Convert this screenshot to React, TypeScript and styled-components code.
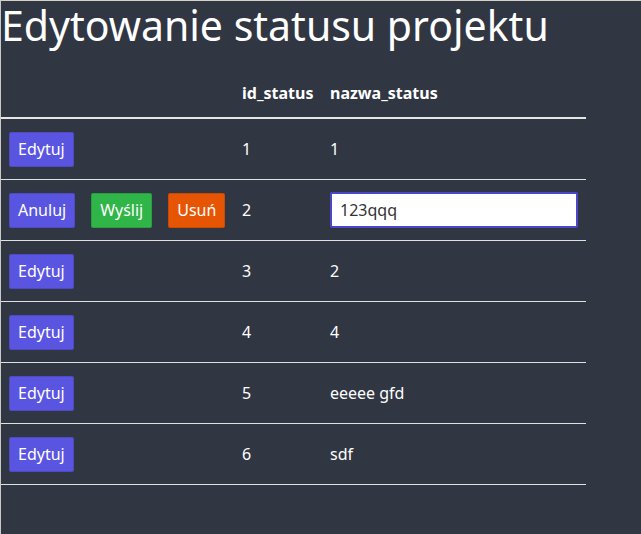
import { styled, createGlobalStyle } from 'styled-components'

const GlobalStyle = createGlobalStyle`
  html, body {
    margin: 0;
    padding: 0;
    background-color: #313643;
  }
  body {
    font-family: 'Noto Sans', 'Open Sans', sans-serif;
    color: #ffffff;
  }
`

const PageDiv = styled.div`
  min-height: 533px;
  border-top: 1px solid #d6d1c6;
  border-left: 1px solid #c9c9c9;
  background-color: #313643;
`

const Title = styled.h1`
  margin: 0;
  padding: 4px 0 0 0;
  font-size: 41px;
  font-weight: 400;
  line-height: 41px;
  color: #ffffff;
`

const StatusTable = styled.table`
  width: 585px;
  margin-top: 8px;
  border-collapse: collapse;
  table-layout: fixed;
`

const HeadCell = styled.th<{ $w?: number }>`
  width: ${(p) => (p.$w ? `${p.$w}px` : 'auto')};
  height: 50px;
  padding: 0 8px 13px;
  text-align: left;
  vertical-align: bottom;
  font-size: 16px;
  font-weight: 700;
  line-height: 22px;
  border-bottom: 2px solid #e6e6e6;
`

const Row = styled.tr`
  border-bottom: 1px solid #e0e0e0;
`

const Cell = styled.td`
  height: 60px;
  padding: 0 8px;
  font-size: 16px;
  vertical-align: middle;
  white-space: nowrap;
`

const Button = styled.button<{ $color: string }>`
  font-family: 'Noto Sans', sans-serif;
  font-size: 16px;
  line-height: 23px;
  padding: 5px 8px;
  margin-right: 16px;
  color: #ffffff;
  background-color: ${(p) => p.$color};
  border: 1px solid rgba(0, 0, 0, 0.12);
  border-radius: 2px;
  cursor: pointer;
  &:last-child {
    margin-right: 0;
  }
`

const NameInput = styled.input`
  box-sizing: border-box;
  width: 248px;
  height: 36px;
  padding: 0 8px;
  font-family: 'Noto Sans', sans-serif;
  font-size: 16px;
  color: #333333;
  background: #ffffff;
  border: 2px solid #4b47c9;
  border-radius: 2px;
  outline: none;
`

const BLUE = '#5a55e0'
const GREEN = '#2fb548'
const ORANGE = '#e65504'

const statuses = [
  { id: 1, name: '1' },
  { id: 2, name: '123qqq', editing: true },
  { id: 3, name: '2' },
  { id: 4, name: '4' },
  { id: 5, name: 'eeeee gfd' },
  { id: 6, name: 'sdf' },
]

function App() {
  return (
    <PageDiv>
      <GlobalStyle />
      <Title>Edytowanie statusu projektu</Title>
      <StatusTable>
        <thead>
          <tr>
            <HeadCell $w={217}></HeadCell>
            <HeadCell $w={72}>id_status</HeadCell>
            <HeadCell>nazwa_status</HeadCell>
          </tr>
        </thead>
        <tbody>
          {statuses.map((s) => (
            <Row key={s.id}>
              <Cell>
                {s.editing ? (
                  <>
                    <Button $color={BLUE}>Anuluj</Button>
                    <Button $color={GREEN}>Wyślij</Button>
                    <Button $color={ORANGE}>Usuń</Button>
                  </>
                ) : (
                  <Button $color={BLUE}>Edytuj</Button>
                )}
              </Cell>
              <Cell>{s.id}</Cell>
              <Cell>
                {s.editing ? <NameInput defaultValue={s.name} /> : s.name}
              </Cell>
            </Row>
          ))}
        </tbody>
      </StatusTable>
    </PageDiv>
  )
}

export default App
